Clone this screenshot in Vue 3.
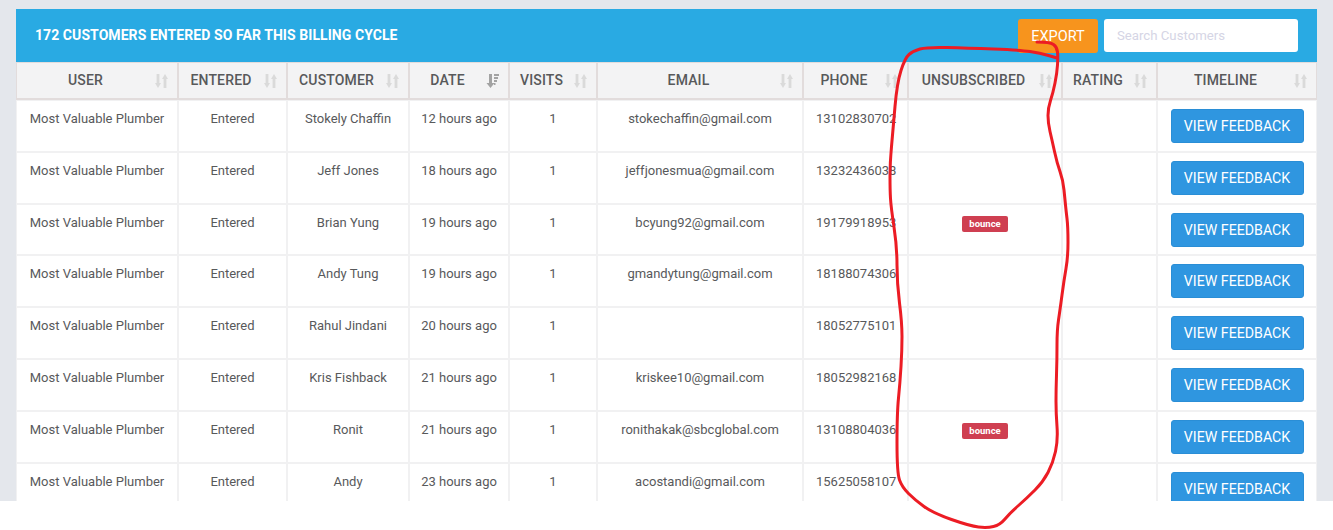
<script setup>
const cols = [
  { key: 'user', label: 'USER', cls: 'c1' },
  { key: 'entered', label: 'ENTERED', cls: 'c2' },
  { key: 'customer', label: 'CUSTOMER', cls: 'c3' },
  { key: 'date', label: 'DATE', cls: 'c4', sorted: true },
  { key: 'visits', label: 'VISITS', cls: 'c5' },
  { key: 'email', label: 'EMAIL', cls: 'c6' },
  { key: 'phone', label: 'PHONE', cls: 'c7' },
  { key: 'unsub', label: 'UNSUBSCRIBED', cls: 'c8' },
  { key: 'rating', label: 'RATING', cls: 'c9' },
  { key: 'timeline', label: 'TIMELINE', cls: 'c10' }
]
const rows = [
  ['Stokely Chaffin', '12 hours ago', 'stokechaffin@gmail.com', '13102830702', false],
  ['Jeff Jones', '18 hours ago', 'jeffjonesmua@gmail.com', '13232436038', false],
  ['Brian Yung', '19 hours ago', 'bcyung92@gmail.com', '19179918953', true],
  ['Andy Tung', '19 hours ago', 'gmandytung@gmail.com', '18188074306', false],
  ['Rahul Jindani', '20 hours ago', '', '18052775101', false],
  ['Kris Fishback', '21 hours ago', 'kriskee10@gmail.com', '18052982168', false],
  ['Ronit', '21 hours ago', 'ronithakak@sbcglobal.com', '13108804036', true],
  ['Andy', '23 hours ago', 'acostandi@gmail.com', '15625058107', false]
]
const pts = [
  [1037,42],[1050,42],[1057,47],[1058,57],[1057,73],[1053,93],[1048,108],[1048,123],[1052,140],[1057,163],
  [1063,180],[1065,200],[1066,210],[1068,227],[1068,257],[1064,280],[1060,310],[1057,330],[1057,360],
  [1056,390],[1056,413],[1058,440],[1053,463],[1043,482],[1027,498],[1010,513],[1000,525],[987,528],
  [970,526],[933,513],[915,500],[902,487],[897,473],[897,413],[900,383],[902,350],[902,323],[897,283],
  [897,247],[891,207],[890,190],[890,163],[893,130],[897,83],[905,58],[913,51],[927,47],[967,48],
  [1020,50],[1040,53],[1057,58]
]
let d = `M${pts[0][0]} ${pts[0][1]}`
for (let i = 1; i < pts.length - 1; i++) {
  const mx = (pts[i][0] + pts[i + 1][0]) / 2
  const my = (pts[i][1] + pts[i + 1][1]) / 2
  d += `Q${pts[i][0]} ${pts[i][1]} ${mx} ${my}`
}
d += `L${pts[pts.length - 1][0]} ${pts[pts.length - 1][1]}`
const scribble = d
</script>

<template>
  <div class="page">
    <div class="panel">
      <div class="bar">
        <span class="title">172 CUSTOMERS ENTERED SO FAR THIS BILLING CYCLE</span>
        <div class="tools">
          <button class="export">EXPORT</button>
          <input class="search" placeholder="Search Customers" />
        </div>
      </div>
      <table>
        <colgroup>
          <col v-for="c in cols" :key="c.key" :class="c.cls" />
        </colgroup>
        <thead>
          <tr>
            <th v-for="c in cols" :key="c.key">
              <span>{{ c.label }}</span>
              <svg class="sort" viewBox="0 0 13 14" width="13" height="14">
                <template v-if="c.sorted">
                  <path d="M3 0h3v9h2.5L4.5 14 .5 9H3z" fill="#a3a3a3" />
                  <path d="M8 1h5M8 4h4M8 7h3M8 10h1.5" stroke="#a3a3a3" stroke-width="2" fill="none" />
                </template>
                <template v-else>
                  <path d="M1.6 0h2.8v9H6l-3 5-3-5h1.6z" fill="#dadada" />
                  <path d="M8.6 14h2.8V5H13l-3-5-3 5h1.6z" fill="#dadada" />
                </template>
              </svg>
            </th>
          </tr>
        </thead>
        <tbody>
          <tr v-for="r in rows" :key="r[0]">
            <td>Most Valuable Plumber</td>
            <td>Entered</td>
            <td>{{ r[0] }}</td>
            <td>{{ r[1] }}</td>
            <td>1</td>
            <td>{{ r[2] }}</td>
            <td class="phone">{{ r[3] }}</td>
            <td><span v-if="r[4]" class="badge">bounce</span></td>
            <td></td>
            <td class="action"><button class="feedback">VIEW FEEDBACK</button></td>
          </tr>
        </tbody>
      </table>
    </div>
    <svg class="scribble" width="1333" height="530" viewBox="0 0 1333 530">
      <path :d="scribble" />
    </svg>
  </div>
</template>

<style>
html, body { background: #fff; }
</style>

<style scoped>
.page {
  position: relative;
  width: 1333px;
  height: 530px;
  overflow: hidden;
  background: #fff;
  font-family: Roboto, "Liberation Sans", sans-serif;
}
.panel {
  height: 501px;
  box-sizing: border-box;
  padding: 9px 16px 0;
  background: #e4e7ec;
  overflow: hidden;
}
.bar {
  height: 53px;
  box-sizing: border-box;
  padding: 10px 19px 0;
  display: flex;
  justify-content: space-between;
  background: #29aae3;
  color: #fff;
}
.title {
  font-size: 14px;
  font-weight: 700;
  line-height: 33px;
  letter-spacing: 0.07px;
}
.tools { display: flex; gap: 6px; }
.export {
  width: 80px;
  height: 34px;
  padding: 0;
  border: 0;
  border-radius: 3px;
  background: #f7941d;
  color: #fff;
  font: 14.5px Roboto, sans-serif;
}
.search {
  width: 194px;
  height: 33px;
  box-sizing: border-box;
  padding: 0 13px;
  border: 0;
  border-radius: 3px;
  background: #fff;
  font: 13.2px Roboto, sans-serif;
}
.search::placeholder { color: #d5d5e5; opacity: 1; }
table {
  width: 1301px;
  table-layout: fixed;
  border-collapse: separate;
  border-spacing: 0;
  background: #fff;
  color: #58595b;
  font-size: 13px;
}
.c1 { width: 162px; }
.c2 { width: 109px; }
.c3 { width: 122px; }
.c4 { width: 100px; }
.c5 { width: 88px; }
.c6 { width: 206px; }
.c7 { width: 105px; }
.c8 { width: 154px; }
.c9 { width: 95px; }
.c10 { width: 160px; }
th {
  position: relative;
  height: 38px;
  box-sizing: border-box;
  padding: 0 31px 2px 8px;
  border: 1px solid #e2dcdc;
  border-bottom-width: 2px;
  background: #f3f3f4;
  font-size: 14px;
  font-weight: 500;
  letter-spacing: 0.15px;
  white-space: nowrap;
}
.sort { position: absolute; right: 9px; top: 11px; }
td {
  height: 51.8px;
  box-sizing: border-box;
  padding: 10px 8px 0;
  border: 1px solid #f1f1f2;
  vertical-align: top;
  text-align: center;
  line-height: 16px;
  white-space: nowrap;
}
td.phone { text-align: left; padding-left: 12px; }
td.action { padding: 8px 0 0; }
.feedback {
  width: 133px;
  height: 34px;
  padding: 0;
  border: 1px solid #2a8ed6;
  border-radius: 3px;
  background: #2f96e0;
  color: #fff;
  font: 14.2px Roboto, sans-serif;
}
.badge {
  display: inline-block;
  width: 46px;
  height: 16px;
  margin-top: 1px;
  border-radius: 2px;
  background: #cf3f51;
  color: #fff;
  font-size: 9.5px;
  font-weight: 700;
  line-height: 15px;
  vertical-align: top;
}
.scribble {
  position: absolute;
  inset: 0;
  pointer-events: none;
}
.scribble path {
  fill: none;
  stroke: #ec1c24;
  stroke-width: 3;
  stroke-linecap: round;
  stroke-linejoin: round;
}
</style>
